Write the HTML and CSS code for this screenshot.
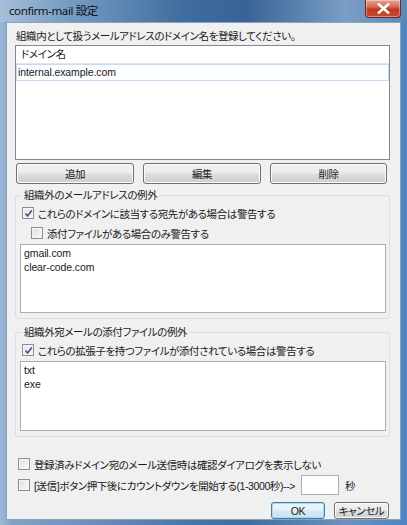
FILE: index.html
```html
<!DOCTYPE html>
<html lang="ja">
<head>
<meta charset="utf-8">
<link rel="stylesheet" href="styles.css">
</head>
<body>
<div class="window">
  <div class="titlebar">
    <span class="title">confirm-mail 設定</span>
    <span class="close"><svg width="13" height="11" viewBox="0 0 13 11"><path d="M2 1.5 L11 9.5 M11 1.5 L2 9.5" stroke="#ffffff" stroke-width="2.6" stroke-linecap="square"/></svg></span>
  </div>
  <div class="client">
    <div class="intro">組織内として扱うメールアドレスのドメイン名を登録してください。</div>
    <div class="listbox">
      <div class="list-head">ドメイン名</div>
      <div class="list-row selected">internal.example.com</div>
    </div>
    <div class="btnrow">
      <button class="btn">追加</button>
      <button class="btn">編集</button>
      <button class="btn">削除</button>
    </div>
    <fieldset class="group g1">
      <legend>組織外のメールアドレスの例外</legend>
      <div class="check-row"><span class="cb checked"><svg width="9" height="9" viewBox="0 0 9 9"><path d="M1.5 4.5 L3.6 7 L7.8 1.5" fill="none" stroke="#3b4f8c" stroke-width="1.6"/></svg></span>これらのドメインに該当する宛先がある場合は警告する</div>
      <div class="check-row indent"><span class="cb"></span>添付ファイルがある場合のみ警告する</div>
      <div class="textarea ta1">gmail.com<br>clear-code.com</div>
    </fieldset>
    <fieldset class="group g2">
      <legend>組織外宛メールの添付ファイルの例外</legend>
      <div class="check-row"><span class="cb checked"><svg width="9" height="9" viewBox="0 0 9 9"><path d="M1.5 4.5 L3.6 7 L7.8 1.5" fill="none" stroke="#3b4f8c" stroke-width="1.6"/></svg></span>これらの拡張子を持つファイルが添付されている場合は警告する</div>
      <div class="textarea ta2">txt<br>exe</div>
    </fieldset>
    <div class="check-row bottom1"><span class="cb"></span>登録済みドメイン宛のメール送信時は確認ダイアログを表示しない</div>
    <div class="check-row bottom2"><span class="cb"></span>[送信]ボタン押下後にカウントダウンを開始する(1-3000秒)--&gt;<span class="numbox"></span><span class="unit">秒</span></div>
    <div class="dlg-buttons">
      <button class="btn default">OK</button>
      <button class="btn">キャンセル</button>
    </div>
  </div>
</div>
</body>
</html>
```
FILE: styles.css
```css
* { box-sizing: border-box; }
html, body { margin: 0; padding: 0; }
body {
  width: 407px;
  height: 525px;
  overflow: hidden;
  font-family: "Liberation Sans", "Noto Sans CJK JP", sans-serif;
  font-size: 10.5px;
  letter-spacing: -0.4px;
  color: #1a1a1a;
}
.window {
  width: 407px;
  height: 525px;
  display: flex;
  flex-direction: column;
  padding: 0 6px 5px 6px;
  background: linear-gradient(to right, #9cb9d6 0%, #7fa3c8 3%, #6d93bd 20%, #4a77a8 45%, #3f6d9f 60%, #6c92bd 85%, #4e84c2 99%);
}
.titlebar {
  height: 22px;
  display: flex;
  align-items: flex-start;
  flex-shrink: 0;
  margin: 0 -6px;
  padding-left: 9px;
  background: linear-gradient(to right, #a6c0da 0%, #7b9fc5 15%, #3f6d9f 45%, #386396 60%, #7a9ec6 85%, #5d87b6 100%);
}
.title {
  font-family: "Noto Sans", "Noto Sans CJK JP", sans-serif;
  font-size: 11.5px;
  letter-spacing: -0.4px;
  line-height: 22px;
  color: #101010;
  font-feature-settings: "palt";
}
.close {
  margin-left: auto;
  margin-right: 6px;
  width: 36px;
  height: 18px;
  border: 1px solid #6b2a25;
  border-top: none;
  border-radius: 0 0 4px 4px;
  background: linear-gradient(to bottom, #e4a595 0%, #d26b56 40%, #c0391f 55%, #c94b30 100%);
  display: flex;
  align-items: center;
  justify-content: center;
  box-shadow: inset 0 0 0 1px rgba(255,255,255,0.35);
}
.client {
  flex: 1;
  background: #f0f0f0;
  border: 1px solid #8ba3bd;
  padding: 4px 10px 0 8px;
  display: flex;
  flex-direction: column;
  overflow: hidden;
}
.intro {
  height: 18px;
  line-height: 18px;
  padding-left: 1px;
  font-feature-settings: "palt";
}
.listbox {
  height: 115px;
  background: #fff;
  border: 1px solid #828790;
  display: flex;
  flex-direction: column;
}
.list-head {
  height: 18px;
  line-height: 17px;
  padding-left: 5px;
  border-bottom: 1px solid #e5e5e5;
  font-feature-settings: "palt";
}
.list-row {
  height: 17px;
  line-height: 15px;
  padding-left: 1px;
  letter-spacing: -0.1px;
}
.list-row.selected {
  border: 1px solid #c6dcf3;
  background: #fbfdff;
}
.btnrow {
  margin-top: 3px;
  display: grid;
  grid-template-columns: 118px 118px 117px;
  column-gap: 9px;
  padding-left: 1px;
}
.btn {
  height: 21px;
  font-family: "Liberation Sans", "Noto Sans CJK JP", sans-serif;
  font-size: 10.5px;
  letter-spacing: -0.4px;
  color: #1a1a1a;
  border: 1px solid #707070;
  border-radius: 3px;
  background: linear-gradient(to bottom, #f2f2f2 0%, #ebebeb 48%, #dddddd 52%, #cfcfcf 100%);
  box-shadow: inset 0 0 0 1px #fcfcfc;
  padding: 0;
  font-feature-settings: "palt";
}
.group {
  margin: 0;
  border: 1px solid #d5dfe5;
  border-radius: 3px;
  padding: 0 3px 5px 4px;
  min-width: 0;
}
.group legend {
  padding: 0 2px;
  margin-left: 2px;
  height: 16px;
  line-height: 16px;
  font-feature-settings: "palt";
}
.g1 { margin-top: 3px; }
.g2 { margin-top: 5px; }
.check-row {
  height: 20px;
  display: flex;
  align-items: center;
  font-feature-settings: "palt";
  white-space: nowrap;
}
.g1 .check-row, .g2 .check-row { padding-left: 2px; }
.check-row.indent { padding-left: 11px; }
.cb {
  width: 12px;
  height: 12px;
  flex-shrink: 0;
  margin-right: 4px;
  border: 1px solid #8e8f8f;
  background: linear-gradient(135deg, #dcdcdc 0%, #f0f0f0 60%, #fafafa 100%);
  box-shadow: inset 0 0 0 1px #f4f4f4;
  display: flex;
  align-items: center;
  justify-content: center;
}
.cb.checked {
  background: linear-gradient(135deg, #e6e6e6 0%, #f6f6f6 100%);
}
.textarea {
  background: #fff;
  border: 1px solid #abadb3;
  padding: 1px 3px;
  line-height: 14px;
  letter-spacing: -0.1px;
}
.ta1 { height: 69px; margin-top: 1px; }
.ta2 { height: 70px; margin-top: 1px; }
.bottom1 { margin-top: 17px; padding-left: 3px; }
.bottom2 { height: 22px; padding-left: 3px; }
.numbox {
  width: 38px;
  height: 20px;
  background: #fff;
  border: 1px solid #abadb3;
  margin-left: 6px;
}
.unit { margin-left: 6px; }
.dlg-buttons {
  margin-top: 6px;
  display: flex;
  justify-content: flex-end;
  gap: 9px;
  padding-right: 1px;
}
.dlg-buttons .btn {
  height: 17px;
  width: 55px;
}
.btn.default {
  width: 54px;
  border-color: #3c7fb1;
  box-shadow: inset 0 0 0 1px #9fdaf7;
  background: linear-gradient(to bottom, #f0f7fb 0%, #e6f1f8 48%, #d7e9f4 52%, #c9e1f0 100%);
}
```
